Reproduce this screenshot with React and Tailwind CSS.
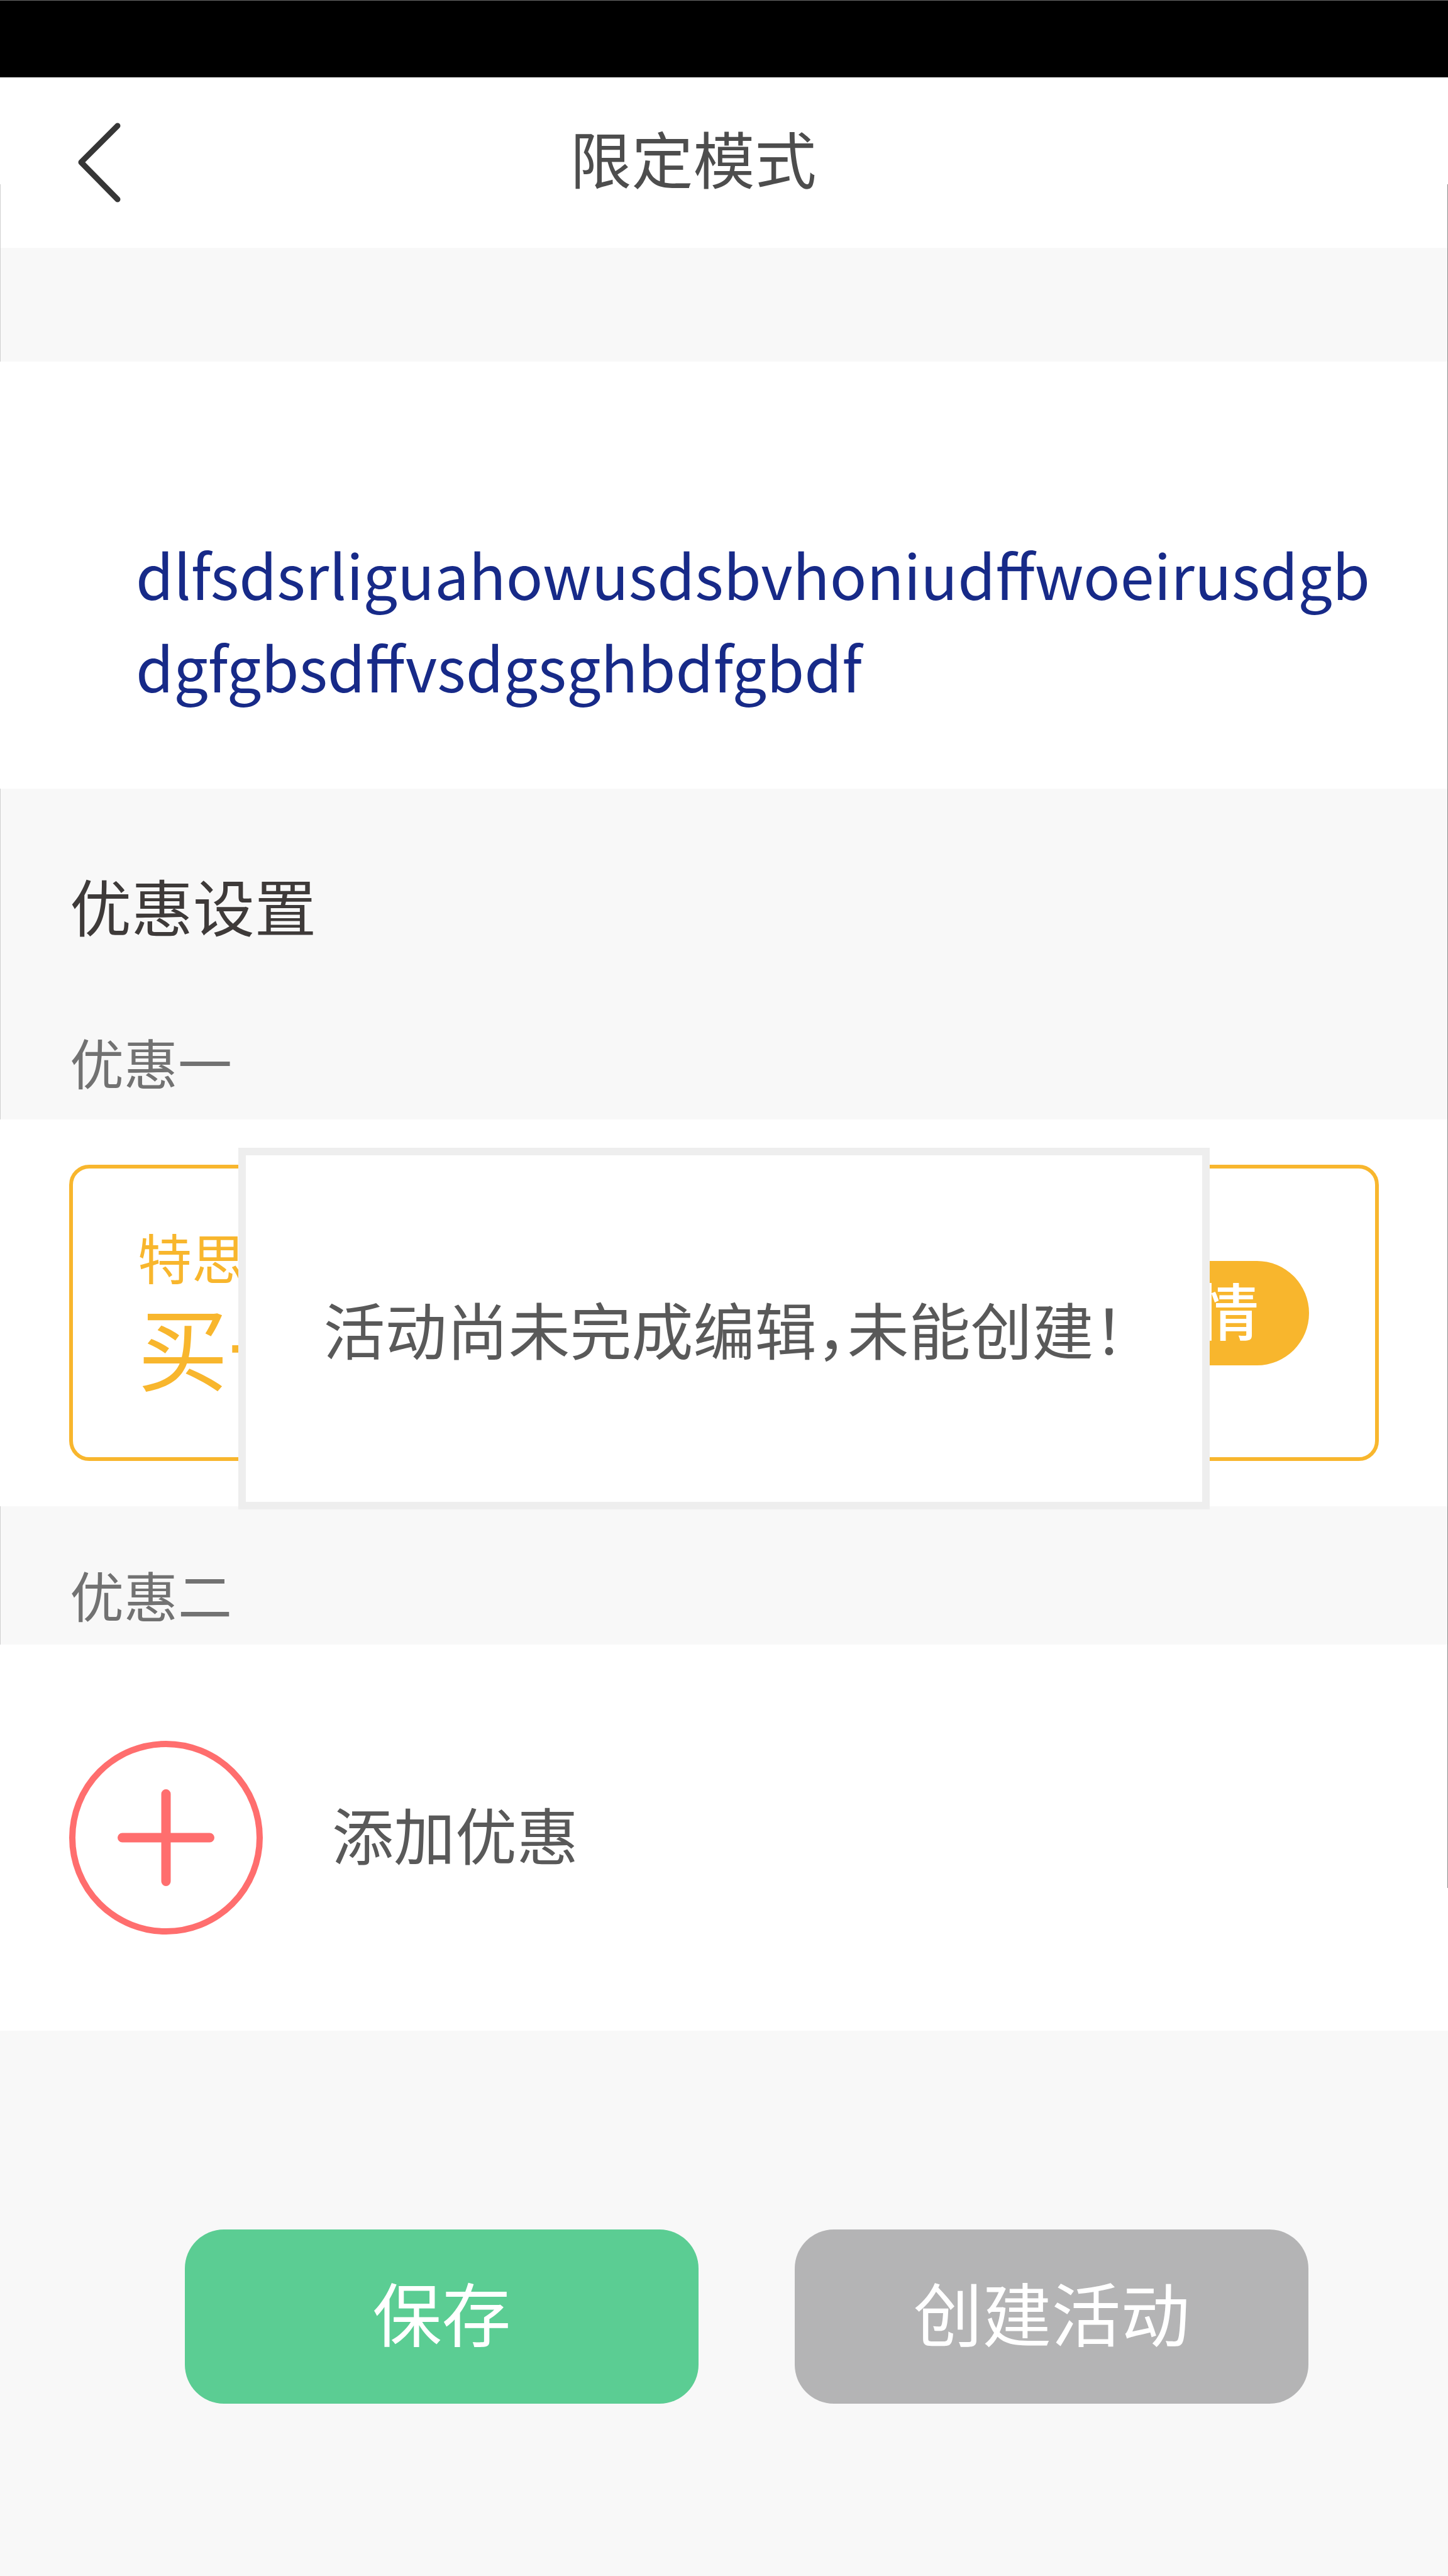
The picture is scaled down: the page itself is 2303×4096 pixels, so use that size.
import React from "react";

function BackIcon() {
  return (
    <svg className="h-[136px] w-[78px]" viewBox="0 0 78 136" fill="none" aria-hidden="true">
      <path d="M68 9 L10 67 L68 126" stroke="#363636" strokeWidth="9" strokeLinecap="round" strokeLinejoin="round" />
    </svg>
  );
}

function AddIcon() {
  return (
    <svg className="size-[308px] shrink-0" viewBox="0 0 308 308" fill="none" stroke="#ff6e6e" aria-hidden="true">
      <circle cx="154" cy="154" r="149" strokeWidth="10" />
      <path d="M154 84.500V223.500M84.500 154H223.500" strokeWidth="15" strokeLinecap="round" />
    </svg>
  );
}

function Coupon() {
  return (
    <article className="flex h-[471px] items-center justify-between rounded-[32px] border-[6px] border-[#f8b62d] pr-[105px] pl-[103px] text-[#f8b62d]">
      <div>
        <p className="text-[86px] leading-[100px]">特思</p>
        <p className="text-[144px] leading-[180px]">买一</p>
      </div>
      <button
        type="button"
        className="h-[166px] rounded-full bg-[#f8b62d] px-[80px] pb-[16px] text-[98px] leading-none font-medium text-white"
      >
        详情
      </button>
    </article>
  );
}

export default function App() {
  return (
    <div
      lang="zh-CN"
      className="relative flex min-h-screen flex-col bg-[#f8f8f8] font-['Noto_Sans_CJK_SC',sans-serif]"
    >
      <div className="h-[123px] border-t border-[#6a6a6a] bg-black" />
      <header className="relative grid h-[271px] grid-cols-[1fr_auto_1fr] items-center bg-white pr-[217px] pl-[119px]">
        <button type="button" aria-label="返回" className="justify-self-start">
          <BackIcon />
        </button>
        <h1 className="pb-[20px] text-[98px] leading-[140px] text-[#4d4d4d]">限定模式</h1>
        <span className="absolute bottom-0 left-0 h-[101px] w-px bg-[#d0d0d0]" />
      </header>
      <div className="h-[181px] border-l border-[#d0d0d0]" />

      <section className="bg-white pt-[263px] pr-[110px] pb-[122px] pl-[216px]">
        <p className="text-[97px] leading-[147px] break-all text-[#172a88]">
          dlfsdsrliguahowusdsbvhoniudffwoeirusdgbdgfgbsdffvsdgsghbdfgbdf
        </p>
      </section>

      <div className="border-l border-[#d0d0d0] pt-[114px] pb-[32px] pl-[110px]">
        <h2 className="text-[98px] leading-[140px] text-[#3e3a39]">优惠设置</h2>
        <h3 className="mt-[120px] text-[86px] leading-[120px] text-[#727272]">优惠一</h3>
      </div>

      <section className="relative bg-white px-[110px] py-[72px]">
        <Coupon />
        <div
          role="alertdialog"
          aria-label="提示"
          className="absolute inset-x-0 top-[45px] mx-auto flex h-[575px] w-[1545px] items-center justify-center border-[12px] border-[#eeeeee] bg-white pb-[4px]"
        >
          <p className="text-[98px] leading-[140px] whitespace-nowrap text-[#595959] [font-feature-settings:'halt']">
            活动尚未完成编辑，未能创建！
          </p>
        </div>
      </section>

      <div className="border-l border-[#d0d0d0] pt-[80px] pb-[20px] pl-[110px]">
        <h3 className="text-[86px] leading-[120px] text-[#727272]">优惠二</h3>
      </div>

      <section className="bg-white px-[110px] py-[153px]">
        <button type="button" className="flex items-center gap-[110px] text-[98px] leading-[140px] text-[#595959]">
          <AddIcon />
          <span className="pb-[16px]">添加优惠</span>
        </button>
      </section>

      <div className="mt-[316px] mr-[222px] mb-[200px] ml-[294px] grid grid-cols-2 gap-[153px] text-[110px] leading-none text-white">
        <button type="button" className="h-[277px] rounded-[62px] bg-[#5bcd93] pb-[18px]">
          保存
        </button>
        <button type="button" className="h-[277px] rounded-[62px] bg-[#b4b4b5] pb-[18px]">
          创建活动
        </button>
      </div>

      <span className="absolute top-[293px] right-0 h-[2709px] w-px bg-[#8a8a8a]" />
    </div>
  );
}
